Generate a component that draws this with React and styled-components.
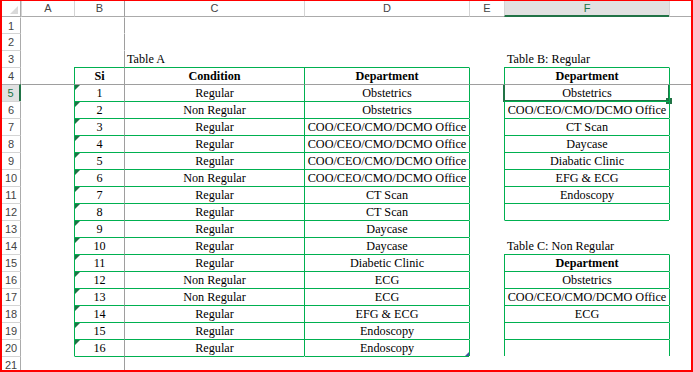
import styled, { createGlobalStyle } from 'styled-components'

const GREEN = '#00b050';
const FREEZE = '#9e9e9e';
const EXCEL = '#217346';

const GlobalStyle = createGlobalStyle`
  html, body {
    margin: 0;
    padding: 0;
    background: #fff;
  }
`;

const Frame = styled.div`
  width: 693px;
  height: 372px;
  box-sizing: border-box;
  border: solid #ff0000;
  border-width: 1px 2px 2px 2px;
  overflow: hidden;
  background: #fff;
`;

const Sheet = styled.div`
  display: grid;
  grid-template-columns: 19px 53px 50px 180px 165px 35px 165px 1fr;
  grid-template-rows: 16px 16px repeat(20, 17px);
`;

const Corner = styled.div`
  box-sizing: border-box;
  border-right: 1px solid #ababab;
  border-bottom: 1px solid #ababab;
  display: flex;
  align-items: flex-end;
  justify-content: flex-end;
  padding: 0 2px 2px 0;
`;

const ColHead = styled.div`
  box-sizing: border-box;
  border-left: 1px solid ${p => p.$freeze ? FREEZE : '#d4d4d4'};
  border-bottom: ${p => p.$active ? `2px solid ${EXCEL}` : '1px solid #ababab'};
  background: ${p => p.$active ? '#e1e1e1' : '#fff'};
  color: ${p => p.$active ? EXCEL : '#444'};
  font-family: "Liberation Sans", Arial, sans-serif;
  font-size: 11px;
  line-height: 15px;
  text-align: center;
`;

const RowHead = styled.div`
  box-sizing: border-box;
  border-top: 1px solid ${p => p.$first ? 'transparent' : p.$active ? '#ababab' : '#d4d4d4'};
  border-right: ${p => p.$active ? `2px solid ${EXCEL}` : '1px solid #ababab'};
  background: ${p => p.$active ? '#e1e1e1' : '#fff'};
  color: ${p => p.$active ? EXCEL : '#444'};
  font-family: "Liberation Sans", Arial, sans-serif;
  font-size: 11px;
  line-height: 16px;
  text-align: center;
`;

const Cell = styled.div`
  position: relative;
  box-sizing: border-box;
  border-top: 1px solid ${p => p.$top};
  border-left: 1px solid ${p => p.$left};
  padding: 1px 2px 0;
  font-family: "Liberation Serif", "Times New Roman", serif;
  font-size: 12.2px;
  line-height: 15px;
  font-weight: ${p => p.$bold ? 700 : 400};
  text-align: ${p => p.$align};
  white-space: nowrap;
  color: #000;
`;

const ErrorFlag = styled.span`
  position: absolute;
  top: 0;
  left: 0;
  width: 0;
  height: 0;
  border-top: 5px solid #1e7145;
  border-right: 5px solid transparent;
`;

const ResizeHandle = styled.span`
  position: absolute;
  right: 0;
  bottom: 0;
  width: 0;
  height: 0;
  border-bottom: 4px solid #44549c;
  border-left: 4px solid transparent;
`;

const Selection = styled.div`
  position: absolute;
  left: -2px;
  right: -1px;
  top: 0;
  bottom: -1px;
  border: 2px solid ${EXCEL};
  border-top: none;
  pointer-events: none;
`;

const FillHandle = styled.span`
  position: absolute;
  right: -4px;
  bottom: -4px;
  width: 6px;
  height: 6px;
  background: ${EXCEL};
`;

const COLS = ['A', 'B', 'C', 'D', 'E', 'F', 'G'];
const DCMO = 'COO/CEO/CMO/DCMO Office';

const tableA = [
  ['Regular', 'Obstetrics'],
  ['Non Regular', 'Obstetrics'],
  ['Regular', DCMO],
  ['Regular', DCMO],
  ['Regular', DCMO],
  ['Non Regular', DCMO],
  ['Regular', 'CT Scan'],
  ['Regular', 'CT Scan'],
  ['Regular', 'Daycase'],
  ['Regular', 'Daycase'],
  ['Regular', 'Diabetic Clinic'],
  ['Non Regular', 'ECG'],
  ['Non Regular', 'ECG'],
  ['Regular', 'EFG & ECG'],
  ['Regular', 'Endoscopy'],
  ['Regular', 'Endoscopy'],
];

const tableB = ['Obstetrics', DCMO, 'CT Scan', 'Daycase', 'Diabatic Clinic', 'EFG & ECG', 'Endoscopy'];
const tableC = ['Obstetrics', DCMO, 'ECG'];

// cells keyed "row:col", col 1 = A
const cells = {};
const put = (r, c, text, opts = {}) => { cells[`${r}:${c}`] = { text, align: 'center', ...opts }; };

put(3, 3, 'Table A', { align: 'left' });
put(4, 2, 'Si', { bold: true });
put(4, 3, 'Condition', { bold: true });
put(4, 4, 'Department', { bold: true });
tableA.forEach(([cond, dept], i) => {
  put(5 + i, 2, String(i + 1), { flag: true });
  put(5 + i, 3, cond);
  put(5 + i, 4, dept);
});

put(3, 6, 'Table B: Regular', { align: 'left' });
put(4, 6, 'Department', { bold: true });
tableB.forEach((d, i) => put(5 + i, 6, d));

put(14, 6, 'Table C: Non Regular', { align: 'left' });
put(15, 6, 'Department', { bold: true });
tableC.forEach((d, i) => put(16 + i, 6, d));

const tables = [
  { r1: 4, r2: 20, c1: 2, c2: 4 },
  { r1: 4, r2: 12, c1: 6, c2: 6 },
  { r1: 15, r2: 20, c1: 6, c2: 6, open: true },
];

const inTable = (r, c) => tables.find(t => r >= t.r1 && r <= t.r2 && c >= t.c1 && c <= t.c2);

const topColor = (r, c) => {
  if (r === 5) return FREEZE;
  if (inTable(r, c)) return GREEN;
  const up = inTable(r - 1, c);
  if (up && !(up.open && r - 1 === up.r2)) return GREEN;
  return 'transparent';
};

const leftColor = (r, c) => {
  if (c === 3) return FREEZE;
  if (inTable(r, c) || inTable(r, c - 1)) return GREEN;
  return 'transparent';
};

const rows = Array.from({ length: 21 }, (_, i) => i + 1);

const App = () => {
  return (
    <Frame>
      <GlobalStyle />
      <Sheet>
        <Corner>
          <svg width="8" height="8" viewBox="0 0 8 8">
            <polygon points="8,0 8,8 0,8" fill="#d9d9d9" />
          </svg>
        </Corner>
        {COLS.map((name, i) => (
          <ColHead key={name} $freeze={i + 1 === 3} $active={name === 'F'}>
            {name === 'G' ? '' : name}
          </ColHead>
        ))}
        {rows.map(r => [
          <RowHead key={`h${r}`} $first={r === 1} $active={r === 5}>{r}</RowHead>,
          ...COLS.map((name, i) => {
            const c = i + 1;
            const cell = cells[`${r}:${c}`];
            return (
              <Cell
                key={`${r}:${c}`}
                $top={topColor(r, c)}
                $left={leftColor(r, c)}
                $bold={cell?.bold}
                $align={cell?.align || 'left'}
              >
                {cell?.flag && <ErrorFlag />}
                {cell?.text}
                {r === 20 && c === 4 && <ResizeHandle />}
                {r === 5 && c === 6 && (
                  <Selection>
                    <FillHandle />
                  </Selection>
                )}
              </Cell>
            );
          }),
        ])}
      </Sheet>
    </Frame>
  );
}

export default App
